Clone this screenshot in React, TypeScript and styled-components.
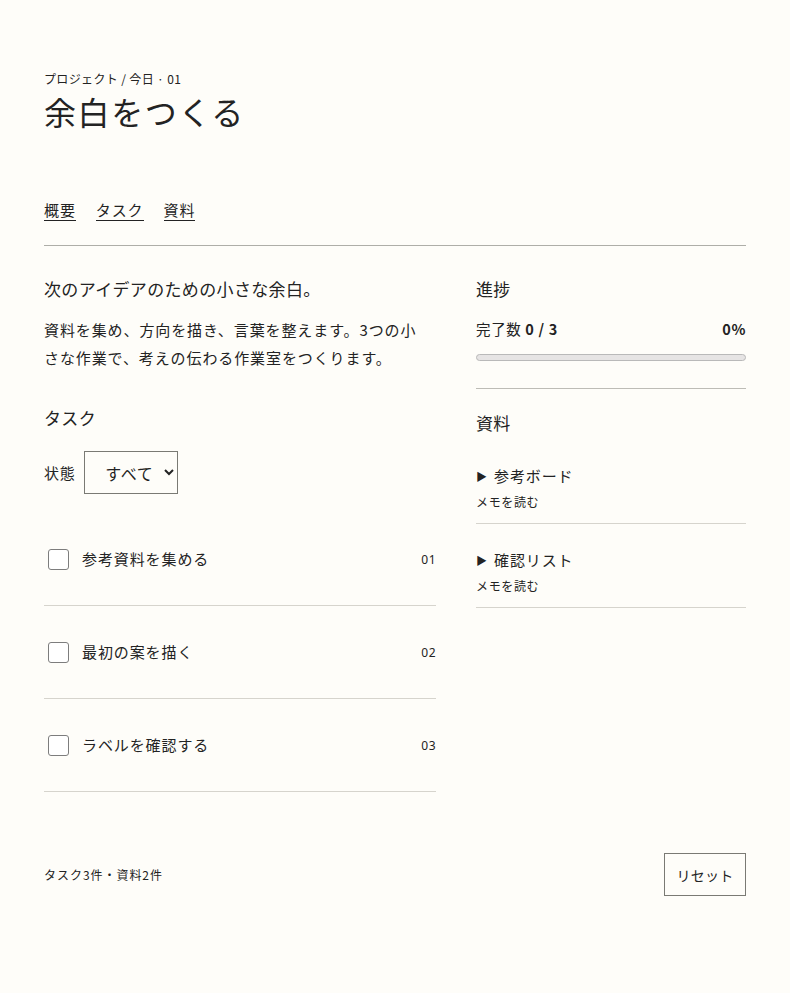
import React, { useState } from "react";
import styled, { createGlobalStyle } from "styled-components";

const INK = "#232323";
const PAPER = "#fefdf9";

const GlobalStyle = createGlobalStyle`
  html, body {
    margin: 0;
    padding: 0;
    background: ${PAPER};
  }
  body {
    color: ${INK};
    font-family: "Noto Sans CJK JP", "Noto Sans", sans-serif;
    letter-spacing: 0.04em;
  }
  * {
    box-sizing: border-box;
  }
`;

const Page = styled.div`
  width: 790px;
  min-height: 993px;
  padding: 70px 44px 40px;
`;

const Crumb = styled.div`
  font-size: 12px;
  line-height: 18px;
  letter-spacing: 0.03em;
`;

const Title = styled.h1`
  margin: 3px 0 0;
  font-size: 32px;
  line-height: 40px;
  font-weight: 400;
  letter-spacing: 0.05em;
`;

const Tabs = styled.nav`
  display: flex;
  gap: 20px;
  margin-top: 68px;
  padding-bottom: 24px;
  border-bottom: 1px solid #aeaea8;
`;

const Tab = styled.a`
  font-size: 15px;
  line-height: 21px;
  letter-spacing: 0.06em;
  color: ${INK};
  text-decoration: none;
  border-bottom: 1.5px solid ${INK};
`;

const Main = styled.main`
  display: grid;
  grid-template-columns: 392px 270px;
  column-gap: 40px;
  padding-top: 31px;
`;

const Column = styled.section`
  display: flex;
  flex-direction: column;
`;

const Lead = styled.h2`
  margin: 0;
  font-size: 17px;
  line-height: 24px;
  font-weight: 400;
  letter-spacing: 0.02em;
`;

const Body = styled.p`
  margin: 15px 0 0;
  max-width: 380px;
  font-size: 15px;
  line-height: 28px;
  letter-spacing: 0.06em;
`;

const SubHeading = styled.h3`
  margin: 33px 0 0;
  font-size: 17px;
  line-height: 26px;
  font-weight: 400;
  letter-spacing: 0.02em;
`;

const FilterRow = styled.label`
  display: flex;
  align-items: center;
  gap: 9px;
  margin-top: 20px;
  font-size: 15px;
`;

const Select = styled.select`
  width: 94px;
  height: 43px;
  padding: 0 6px 0 16px;
  border: 1px solid #7a7a74;
  border-radius: 0;
  background: ${PAPER};
  color: ${INK};
  font-family: inherit;
  font-size: 16px;
  letter-spacing: 0.04em;
`;

const TaskList = styled.ul`
  list-style: none;
  margin: 19px 0 0;
  padding: 0;
`;

const TaskRow = styled.li`
  display: flex;
  align-items: center;
  gap: 13px;
  padding: 35px 0 35px 4px;
  border-bottom: 1px solid #d6d4cd;
`;

const Check = styled.input`
  appearance: none;
  width: 21px;
  height: 21px;
  margin: 0;
  border: 1.5px solid #7d7d7d;
  border-radius: 3px;
  background: #fff;
  cursor: pointer;

  &:checked {
    background: ${INK};
    border-color: ${INK};
  }
`;

const TaskLabel = styled.span<{ $done: boolean }>`
  flex: 1;
  font-size: 15px;
  line-height: 22px;
  letter-spacing: 0.06em;
  text-decoration: ${(p) => (p.$done ? "line-through" : "none")};
`;

const TaskNo = styled.span`
  font-size: 12px;
  font-family: "Noto Sans", sans-serif;
  letter-spacing: 0.04em;
`;

const Panel = styled.div<{ $ruled?: boolean }>`
  padding-bottom: ${(p) => (p.$ruled ? "27px" : "0")};
  border-bottom: ${(p) => (p.$ruled ? "1px solid #bdbcb6" : "none")};
`;

const StatRow = styled.div`
  display: flex;
  justify-content: space-between;
  margin-top: 17px;
  font-size: 14.5px;
  line-height: 22px;
`;

const Strong = styled.b`
  font-weight: 700;
`;

const Track = styled.div`
  height: 7px;
  margin-top: 14px;
  border: 1px solid #b9b9b9;
  border-radius: 4px;
  background: #e6e4e4;
  overflow: hidden;
`;

const Fill = styled.div`
  height: 100%;
  background: ${INK};
`;

const DocHeading = styled.h2`
  margin: 22px 0 5px;
  font-size: 17px;
  line-height: 24px;
  font-weight: 400;
  letter-spacing: 0.02em;
`;

const DocItem = styled.div`
  padding: 25px 0 12px;
  border-bottom: 1px solid #d6d4cd;
`;

const DocSummary = styled.summary`
  list-style: none;
  cursor: pointer;
  font-size: 15px;
  line-height: 22px;
  letter-spacing: 0.06em;

  &::-webkit-details-marker {
    display: none;
  }

  &::before {
    content: "▶";
    display: inline-block;
    width: 18px;
    font-size: 11px;
    vertical-align: 1px;
  }
`;

const Memo = styled.a`
  display: block;
  margin-top: 6px;
  font-size: 12px;
  line-height: 18px;
  color: ${INK};
  text-decoration: none;
`;

const Footer = styled.footer`
  display: flex;
  justify-content: space-between;
  align-items: center;
  margin-top: 61px;
`;

const Count = styled.span`
  font-size: 12px;
  letter-spacing: 0.08em;
`;

const ResetButton = styled.button`
  width: 82px;
  height: 43px;
  border: 1px solid #7a7a74;
  border-radius: 0;
  background: ${PAPER};
  color: ${INK};
  font-family: inherit;
  font-size: 14px;
  letter-spacing: 0.02em;
  cursor: pointer;
`;

const TASKS = [
  { id: "01", label: "参考資料を集める" },
  { id: "02", label: "最初の案を描く" },
  { id: "03", label: "ラベルを確認する" },
];

const DOCS = ["参考ボード", "確認リスト"];

export default function App() {
  const [done, setDone] = useState<Record<string, boolean>>({});
  const [filter, setFilter] = useState("all");

  const doneCount = TASKS.filter((t) => done[t.id]).length;
  const pct = Math.round((doneCount / TASKS.length) * 100);
  const visible = TASKS.filter((t) =>
    filter === "all" ? true : filter === "done" ? done[t.id] : !done[t.id]
  );

  return (
    <>
      <GlobalStyle />
      <Page>
        <header>
          <Crumb>プロジェクト / 今日 · 01</Crumb>
          <Title>余白をつくる</Title>
        </header>

        <Tabs>
          <Tab href="#overview">概要</Tab>
          <Tab href="#tasks">タスク</Tab>
          <Tab href="#docs">資料</Tab>
        </Tabs>

        <Main>
          <Column>
            <Lead>次のアイデアのための小さな余白。</Lead>
            <Body>
              資料を集め、方向を描き、言葉を整えます。3つの小さな作業で、考えの伝わる作業室をつくります。
            </Body>

            <SubHeading id="tasks">タスク</SubHeading>
            <FilterRow>
              状態
              <Select value={filter} onChange={(e) => setFilter(e.target.value)}>
                <option value="all">すべて</option>
                <option value="open">未完了</option>
                <option value="done">完了</option>
              </Select>
            </FilterRow>

            <TaskList>
              {visible.map((t) => (
                <TaskRow key={t.id}>
                  <Check
                    type="checkbox"
                    checked={!!done[t.id]}
                    onChange={() => setDone({ ...done, [t.id]: !done[t.id] })}
                  />
                  <TaskLabel $done={!!done[t.id]}>{t.label}</TaskLabel>
                  <TaskNo>{t.id}</TaskNo>
                </TaskRow>
              ))}
            </TaskList>
          </Column>

          <Column>
            <Panel $ruled>
              <Lead>進捗</Lead>
              <StatRow>
                <span>
                  完了数{" "}
                  <Strong>
                    {doneCount} / {TASKS.length}
                  </Strong>
                </span>
                <Strong>{pct}%</Strong>
              </StatRow>
              <Track>
                <Fill style={{ width: `${pct}%` }} />
              </Track>
            </Panel>

            <Panel id="docs">
              <DocHeading>資料</DocHeading>
              {DOCS.map((d) => (
                <DocItem key={d}>
                  <details>
                    <DocSummary>{d}</DocSummary>
                  </details>
                  <Memo href="#docs">メモを読む</Memo>
                </DocItem>
              ))}
            </Panel>
          </Column>
        </Main>

        <Footer>
          <Count>
            タスク{TASKS.length}件・資料{DOCS.length}件
          </Count>
          <ResetButton onClick={() => setDone({})}>リセット</ResetButton>
        </Footer>
      </Page>
    </>
  );
}
